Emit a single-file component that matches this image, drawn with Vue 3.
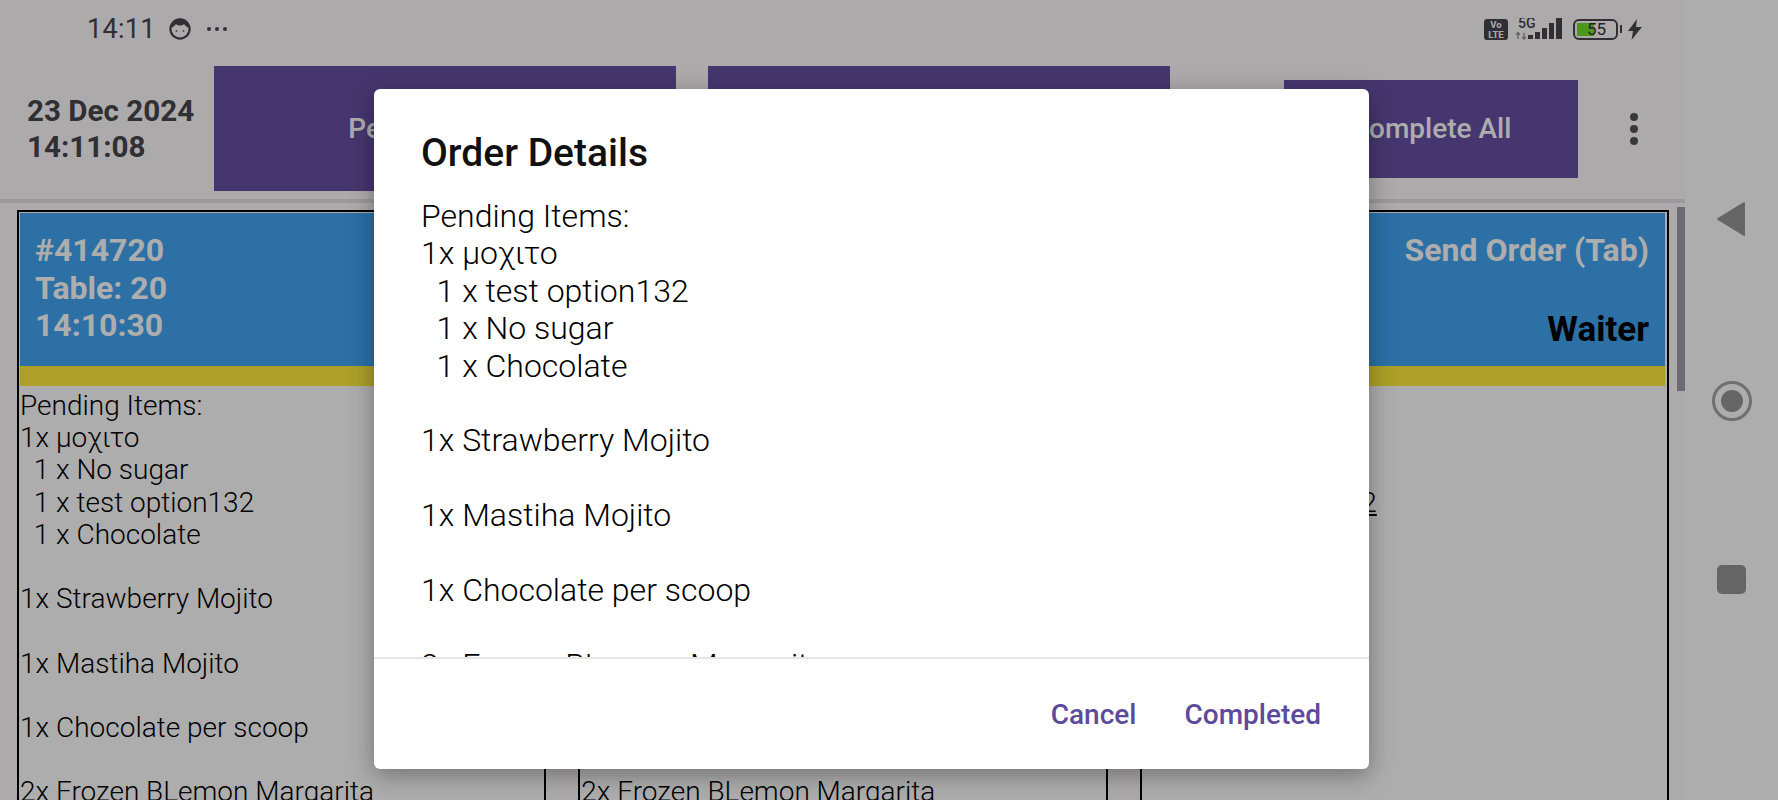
<template>
  <div class="screen">
    <div class="app">
      <div class="status">
        <span class="clock">14:11</span>
        <svg class="face" width="22" height="22" viewBox="0 0 22 22">
          <circle cx="11" cy="11" r="9.6" fill="none" stroke="#48464c" stroke-width="2.2" />
          <path d="M2 10 C2 3 7 1 11 1 C15 1 20 3 20 10 C17 9 16 7 15 6 C13 8 9 8 7 6 C6 7 5 9 2 10 Z" fill="#48464c" />
          <circle cx="7.5" cy="13" r="1" fill="#77747c" />
          <circle cx="14.5" cy="13" r="1" fill="#77747c" />
        </svg>
        <span class="dots"><i></i><i></i><i></i></span>
        <div class="status-right">
          <span class="volte">Vo<br>LTE</span>
          <svg class="signal" width="48" height="22" viewBox="0 0 48 22">
            <text x="3" y="10" font-size="14" font-weight="500" font-family="Roboto, sans-serif" fill="#48464c">5G</text>
            <path d="M3 15v6M1 16.5l2-2 2 2M9 15v6M7 19l2 2 2-2" stroke="#98959c" stroke-width="1.4" fill="none" />
            <rect x="13" y="17" width="5" height="4" fill="#48464c" />
            <rect x="20" y="14" width="5" height="7" fill="#48464c" />
            <rect x="27" y="10" width="5" height="11" fill="#48464c" />
            <rect x="34" y="5" width="5" height="16" fill="#48464c" />
            <rect x="41" y="0" width="6" height="21" fill="#48464c" />
          </svg>
          <div class="battery">
            <span class="level"></span>
            <span class="pct">55</span>
          </div>
          <span class="nub"></span>
          <svg class="bolt" width="14" height="21" viewBox="0 0 14 21">
            <path d="M9 0 L0 12 H5 L3.5 21 L14 8 H8 Z" fill="#48464c" />
          </svg>
        </div>
      </div>

      <div class="topbar">
        <div class="date">23 Dec 2024<br>14:11:08</div>
        <button class="tab">Pending Orders</button>
        <button class="tab">Completed Orders</button>
        <button class="complete-all">Complete All</button>
        <span class="kebab"><i></i><i></i><i></i></span>
      </div>
      <div class="rule"></div>

      <div class="orders">
        <div v-for="order in orders" :key="order.id" class="card">
          <div class="card-head">
            <div class="head-left">
              <div>#{{ order.id }}</div>
              <div>Table: {{ order.table }}</div>
              <div>{{ order.time }}</div>
            </div>
            <div class="head-right">
              <div>{{ order.type }}</div>
              <div class="waiter">Waiter</div>
            </div>
          </div>
          <div class="stripe"></div>
          <div class="card-body">
            <div v-for="(line, i) in order.lines" :key="i" class="line" :class="{ under: order.mark && line.includes('option132') }">{{ line || " " }}</div>
          </div>
        </div>
        <div class="scrollbar"></div>
      </div>
    </div>

    <div class="nav">
      <svg width="30" height="36" viewBox="0 0 30 36">
        <path d="M27 2 V34 L1 18 Z" fill="#969696" stroke="#969696" stroke-width="2" stroke-linejoin="round" />
      </svg>
      <svg width="40" height="40" viewBox="0 0 40 40">
        <circle cx="20" cy="20" r="18.5" fill="none" stroke="#a6a6a6" stroke-width="3" />
        <circle cx="20" cy="20" r="11" fill="#969696" />
      </svg>
      <span class="square"></span>
    </div>

    <div class="scrim"></div>

    <div class="dialog">
      <h2>Order Details</h2>
      <div class="dialog-body">
        <div v-for="(line, i) in dialogLines" :key="i" class="dialog-line">{{ line || " " }}</div>
      </div>
      <div class="dialog-foot">
        <button>Cancel</button>
        <button>Completed</button>
      </div>
    </div>
  </div>
</template>

<script setup>
const fullLines = [
  "Pending Items:",
  "1x μοχιτο",
  "  1 x No sugar",
  "  1 x test option132",
  "  1 x Chocolate",
  "",
  "1x Strawberry Mojito",
  "",
  "1x Mastiha Mojito",
  "",
  "1x Chocolate per scoop",
  "",
  "2x Frozen BLemon Margarita",
]

const orders = [
  { id: 414720, table: 20, time: "14:10:30", type: "Tab", lines: fullLines },
  { id: 414721, table: 12, time: "14:10:42", type: "Tab", lines: fullLines },
  { id: 414722, table: 7, time: "14:10:55", type: "Send Order (Tab)", mark: true, lines: fullLines.slice(0, 4) },
]

const dialogLines = [
  "Pending Items:",
  "1x μοχιτο",
  "  1 x test option132",
  "  1 x No sugar",
  "  1 x Chocolate",
  "",
  "1x Strawberry Mojito",
  "",
  "1x Mastiha Mojito",
  "",
  "1x Chocolate per scoop",
  "",
  "2x Frozen BLemon Margarita",
]
</script>

<style>
html, body {
  margin: 0;
  background: #fff;
}
</style>

<style scoped>
.screen {
  position: relative;
  display: flex;
  width: 1778px;
  height: 800px;
  overflow: hidden;
  font-family: Roboto, "Noto Sans", sans-serif;
  background: #fff;
}
.app {
  position: relative;
  width: 1685px;
  flex: none;
  background: #fffbfe;
}
.status {
  display: flex;
  align-items: center;
  height: 62px;
  padding: 0 43px 4px 87px;
  box-sizing: border-box;
  color: #48464c;
}
.clock {
  font-size: 27px;
  letter-spacing: 0.3px;
}
.face {
  margin-left: 13px;
}
.dots {
  display: flex;
  gap: 4px;
  margin-left: 16px;
}
.dots i {
  width: 4px;
  height: 4px;
  border-radius: 50%;
  background: #48464c;
}
.status-right {
  display: flex;
  align-items: center;
  margin-left: auto;
}
.volte {
  width: 24px;
  height: 21px;
  border-radius: 3px;
  background: #48464c;
  color: #fffbfe;
  font-size: 9.5px;
  font-weight: 700;
  line-height: 10px;
  text-align: center;
  box-sizing: border-box;
  padding-top: 1px;
  margin-right: 7px;
}
.signal {
  margin-right: 10px;
}
.battery {
  position: relative;
  width: 45px;
  height: 21px;
  box-sizing: border-box;
  border: 2px solid #48464c;
  border-radius: 6px;
  overflow: hidden;
}
.level {
  position: absolute;
  left: 2px;
  top: 2px;
  bottom: 2px;
  width: 17px;
  background: #6fe02a;
}
.pct {
  position: absolute;
  left: 12px;
  top: -2px;
  font-size: 17px;
  line-height: 21px;
  color: #333;
}
.nub {
  width: 2px;
  height: 8px;
  margin-left: 2px;
  background: #48464c;
}
.bolt {
  margin-left: 6px;
}
.topbar {
  display: flex;
  align-items: center;
  height: 137px;
  padding: 0 0 4px 27px;
  box-sizing: border-box;
}
.date {
  width: 187px;
  flex: none;
  font-size: 29.6px;
  font-weight: 700;
  line-height: 36px;
  color: #48464c;
}
.tab, .complete-all {
  border: none;
  border-radius: 0;
  background: #6750a4;
  color: #fff;
  font-family: inherit;
  font-size: 28px;
  font-weight: 500;
  padding: 0;
}
.tab {
  width: 462px;
  height: 125px;
  margin-right: 32px;
}
.complete-all {
  width: 294px;
  height: 98px;
  margin-left: 82px;
}
.kebab {
  display: flex;
  flex-direction: column;
  gap: 4px;
  margin-left: 52px;
}
.kebab i {
  width: 8px;
  height: 8px;
  border-radius: 50%;
  background: #55535a;
}
.rule {
  height: 4px;
  background: #e6e2e8;
}
.orders {
  position: relative;
  display: grid;
  grid-template-columns: repeat(3, 1fr);
  column-gap: 32px;
  padding: 7px 16px 0 17px;
  height: 640px;
  box-sizing: border-box;
}
.card {
  border: 2px solid #000;
  padding: 1px 2px 0 1px;
  background: #fff;
  overflow: hidden;
}
.card-head {
  display: flex;
  justify-content: space-between;
  height: 153px;
  box-sizing: border-box;
  padding: 19px 16px 0 15px;
  background: #42a5f5;
  color: #fff;
  font-size: 32px;
  font-weight: 700;
  line-height: 37.5px;
}
.head-right {
  text-align: right;
  white-space: nowrap;
}
.waiter {
  margin-top: 41px;
  font-size: 35px;
  color: #000;
}
.stripe {
  height: 20px;
  background: #ffeb3b;
}
.card-body {
  padding-top: 4px;
  font-size: 28px;
  line-height: 32.2px;
  font-weight: 300;
  color: #000;
}
.line {
  white-space: pre;
}
.under {
  text-decoration: underline;
}
.scrollbar {
  position: absolute;
  right: 0;
  top: 4px;
  width: 8px;
  height: 184px;
  background: #a39da8;
}
.nav {
  flex: 1;
  display: flex;
  flex-direction: column;
  align-items: center;
  padding-top: 201px;
  gap: 144px;
  background: #fff;
}
.square {
  width: 29px;
  height: 29px;
  border-radius: 5px;
  background: #969696;
}
.scrim {
  position: absolute;
  inset: 0;
  background: rgba(0, 0, 0, 0.32);
}
.dialog {
  position: absolute;
  left: 374px;
  top: 89px;
  width: 995px;
  height: 680px;
  display: flex;
  flex-direction: column;
  background: #fff;
  border-radius: 6px;
  box-shadow: 0 6px 24px rgba(0, 0, 0, 0.35);
}
.dialog h2 {
  margin: 0;
  padding: 41px 47px 0;
  font-size: 39px;
  line-height: 46px;
  font-weight: 500;
  color: #111;
}
.dialog-body {
  flex: 1;
  min-height: 0;
  overflow: hidden;
  margin-top: 22px;
  padding: 0 47px;
  font-size: 32px;
  line-height: 37.4px;
  font-weight: 300;
  color: #000;
}
.dialog-line {
  white-space: pre;
}
.dialog-foot {
  display: flex;
  justify-content: flex-end;
  align-items: center;
  gap: 48px;
  height: 112px;
  padding: 0 48px 0 0;
  border-top: 2px solid #e6e6e6;
  box-sizing: border-box;
}
.dialog-foot button {
  border: none;
  background: none;
  padding: 0;
  font-family: inherit;
  font-size: 28px;
  font-weight: 500;
  color: #5d4a9b;
}
</style>
